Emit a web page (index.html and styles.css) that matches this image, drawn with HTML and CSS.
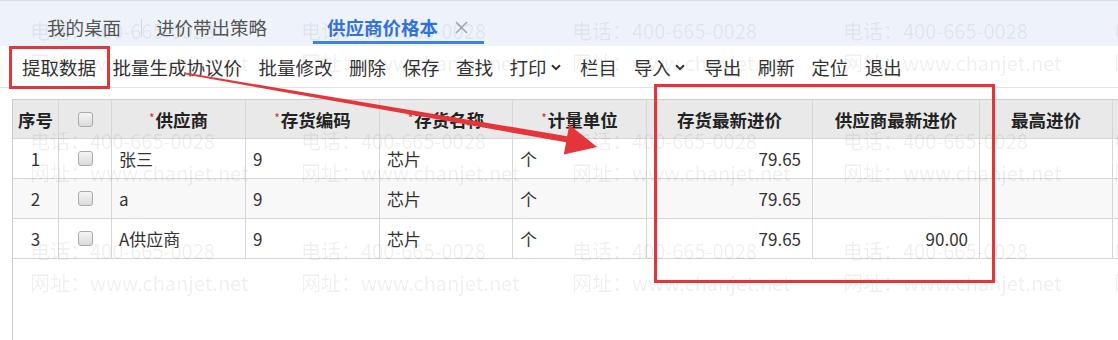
FILE: index.html
```html
<!DOCTYPE html>
<html lang="zh-CN">
<head>
<meta charset="utf-8">
<title>供应商价格本</title>
<link rel="stylesheet" href="styles.css">
</head>
<body>
<div class="app">
  <div class="tabbar">
    <div class="tab">我的桌面</div>
    <span class="tab-sep"></span>
    <div class="tab">进价带出策略</div>
    <div class="tab active">
      <span>供应商价格本</span>
      <svg class="close" viewBox="0 0 13 13" width="13" height="13"><path d="M1 1L12 12M12 1L1 12"/></svg>
    </div>
  </div>

  <div class="toolbar">
    <span class="tool">提取数据</span>
    <span class="tool">批量生成协议价</span>
    <span class="tool">批量修改</span>
    <span class="tool">删除</span>
    <span class="tool">保存</span>
    <span class="tool">查找</span>
    <span class="tool">打印<svg class="chev" viewBox="0 0 10 7" width="10" height="7"><path d="M1 1.2L5 5.2L9 1.2"/></svg></span>
    <span class="tool">栏目</span>
    <span class="tool">导入<svg class="chev" viewBox="0 0 10 7" width="10" height="7"><path d="M1 1.2L5 5.2L9 1.2"/></svg></span>
    <span class="tool">导出</span>
    <span class="tool">刷新</span>
    <span class="tool">定位</span>
    <span class="tool">退出</span>
  </div>

  <div class="grid-area">
    <div class="row head">
      <div class="cell">序号</div>
      <div class="cell"><span class="cb"></span></div>
      <div class="cell"><i class="req">*</i>供应商</div>
      <div class="cell"><i class="req">*</i>存货编码</div>
      <div class="cell"><i class="req">*</i>存货名称</div>
      <div class="cell"><i class="req">*</i>计量单位</div>
      <div class="cell">存货最新进价</div>
      <div class="cell">供应商最新进价</div>
      <div class="cell">最高进价</div>
      <div class="cell"></div>
    </div>
    <div class="row">
      <div class="cell c">1</div>
      <div class="cell c"><span class="cb"></span></div>
      <div class="cell">张三</div>
      <div class="cell">9</div>
      <div class="cell">芯片</div>
      <div class="cell">个</div>
      <div class="cell num">79.65</div>
      <div class="cell num"></div>
      <div class="cell"></div>
      <div class="cell"></div>
    </div>
    <div class="row alt">
      <div class="cell c">2</div>
      <div class="cell c"><span class="cb"></span></div>
      <div class="cell">a</div>
      <div class="cell">9</div>
      <div class="cell">芯片</div>
      <div class="cell">个</div>
      <div class="cell num">79.65</div>
      <div class="cell num"></div>
      <div class="cell"></div>
      <div class="cell"></div>
    </div>
    <div class="row">
      <div class="cell c">3</div>
      <div class="cell c"><span class="cb"></span></div>
      <div class="cell">A供应商</div>
      <div class="cell">9</div>
      <div class="cell">芯片</div>
      <div class="cell">个</div>
      <div class="cell num">79.65</div>
      <div class="cell num">90.00</div>
      <div class="cell"></div>
      <div class="cell"></div>
    </div>
  </div>

  <div class="watermark">
    <div class="wm"><span>电话：400-665-0028</span><span>网址：www.chanjet.net</span></div>
    <div class="wm"><span>电话：400-665-0028</span><span>网址：www.chanjet.net</span></div>
    <div class="wm"><span>电话：400-665-0028</span><span>网址：www.chanjet.net</span></div>
    <div class="wm"><span>电话：400-665-0028</span><span>网址：www.chanjet.net</span></div>
    <div class="wm"><span>电话：400-665-0028</span><span>网址：www.chanjet.net</span></div>
    <div class="wm"><span>电话：400-665-0028</span><span>网址：www.chanjet.net</span></div>
    <div class="wm"><span>电话：400-665-0028</span><span>网址：www.chanjet.net</span></div>
    <div class="wm"><span>电话：400-665-0028</span><span>网址：www.chanjet.net</span></div>
    <div class="wm"><span>电话：400-665-0028</span><span>网址：www.chanjet.net</span></div>
    <div class="wm"><span>电话：400-665-0028</span><span>网址：www.chanjet.net</span></div>
    <div class="wm"><span>电话：400-665-0028</span><span>网址：www.chanjet.net</span></div>
    <div class="wm"><span>电话：400-665-0028</span><span>网址：www.chanjet.net</span></div>
    <div class="wm"><span>电话：400-665-0028</span><span>网址：www.chanjet.net</span></div>
    <div class="wm"><span>电话：400-665-0028</span><span>网址：www.chanjet.net</span></div>
    <div class="wm"><span>电话：400-665-0028</span><span>网址：www.chanjet.net</span></div>
  </div>

  <div class="mark mark-fetch"></div>
  <div class="mark mark-prices"></div>
  <svg class="arrow" viewBox="0 0 1118 340" width="1118" height="340">
    <polygon points="186,74.5 186.3,72.8 568.5,136.4 567.4,142.6"/>
    <polygon points="597,147 563.8,154.5 569.3,124.8"/>
  </svg>
</div>
</body>
</html>
```

FILE: styles.css
```css
* {
  box-sizing: border-box;
}

html, body {
  margin: 0;
  padding: 0;
}

body {
  width: 1118px;
  height: 340px;
  overflow: hidden;
  background: #fff;
  color: #333;
  font-family: "Noto Sans CJK SC", "Noto Sans", sans-serif;
}

.app {
  position: relative;
  height: 340px;
}

/* ---------- tabs ---------- */
.tabbar {
  height: 46px;
  border-top: 1px solid #d9dde4;
  background: #eef3fb;
  display: flex;
  align-items: flex-start;
  padding-left: 47px;
  font-size: 18.5px;
  color: #555;
}

.tab {
  height: 43px;
  padding-top: 14px;
  line-height: 24px;
  border-bottom: 3px solid transparent;
  display: flex;
  align-items: flex-start;
  white-space: nowrap;
}

.tab-sep {
  width: 1px;
  height: 18px;
  margin: 18px 14px 0 20px;
  background: #d3d8e0;
}

.tab.active {
  margin-left: 46px;
  padding-left: 14px;
  padding-right: 16px;
  gap: 17px;
  color: #3274de;
  font-weight: bold;
  border-bottom-color: #3f7fe6;
}

.close {
  margin-top: 6px;
  fill: none;
  stroke: #a3a6ab;
  stroke-width: 1.6;
}

/* ---------- toolbar ---------- */
.toolbar {
  height: 42px;
  border-bottom: 1px solid #e4e4e4;
  display: flex;
  align-items: center;
  gap: 16.5px;
  padding-left: 22px;
  font-size: 18.5px;
  color: #333;
  white-space: nowrap;
}

.tool {
  display: flex;
  align-items: center;
  line-height: 24px;
}

.chev {
  margin: 1px 3px 0 4px;
  fill: none;
  stroke: #333;
  stroke-width: 2;
}

/* ---------- grid ---------- */
.grid-area {
  margin: 11px 0 0 12px;
  height: 242px;
  border-left: 1px solid #cdcdcd;
  border-top: 1px solid #cdcdcd;
}

.row {
  display: grid;
  grid-template-columns: 46px 53px 134px 134px 133px 134px 166px 167px 133px 200px;
  height: 40px;
  font-size: 17px;
  color: #333;
}

.row.alt {
  background: #f8f8f8;
}

.row.head {
  height: 39px;
  background: #e9e9e9;
  font-weight: bold;
  font-size: 17.5px;
  color: #222;
}

.cell {
  display: flex;
  align-items: center;
  padding: 0 7px;
  border-right: 1px solid #d6d6d6;
  border-bottom: 1px solid #d6d6d6;
  white-space: nowrap;
  overflow: hidden;
}

.head .cell {
  justify-content: center;
  padding: 0 4px;
}

.cell.c {
  justify-content: center;
}

.cell.num {
  justify-content: flex-end;
  padding-right: 11px;
}

.req {
  font-style: normal;
  font-weight: normal;
  color: #e22a2a;
  font-size: 12px;
  align-self: flex-start;
  margin-top: 9px;
  margin-right: 1px;
}

.cb {
  width: 15px;
  height: 15px;
  border: 1px solid #a9a9a9;
  border-radius: 3px;
  background: linear-gradient(#f6f6f6, #dadada);
}

/* ---------- watermark ---------- */
.watermark {
  position: absolute;
  left: 30px;
  top: 19px;
  display: grid;
  grid-template-columns: repeat(5, 271px);
  grid-auto-rows: 110px;
  pointer-events: none;
  font-size: 20px;
  color: rgba(0, 0, 0, 0.07);
  white-space: nowrap;
}

.wm {
  display: flex;
  flex-direction: column;
  gap: 8px;
  line-height: 24px;
}

/* ---------- annotations ---------- */
.mark {
  position: absolute;
  border: 3px solid #e5353b;
  pointer-events: none;
}

.mark-fetch {
  left: 9px;
  top: 46px;
  width: 101px;
  height: 43px;
}

.mark-prices {
  left: 654px;
  top: 84px;
  width: 341px;
  height: 199px;
}

.arrow {
  position: absolute;
  left: 0;
  top: 0;
  pointer-events: none;
  fill: #e5353b;
}
```
